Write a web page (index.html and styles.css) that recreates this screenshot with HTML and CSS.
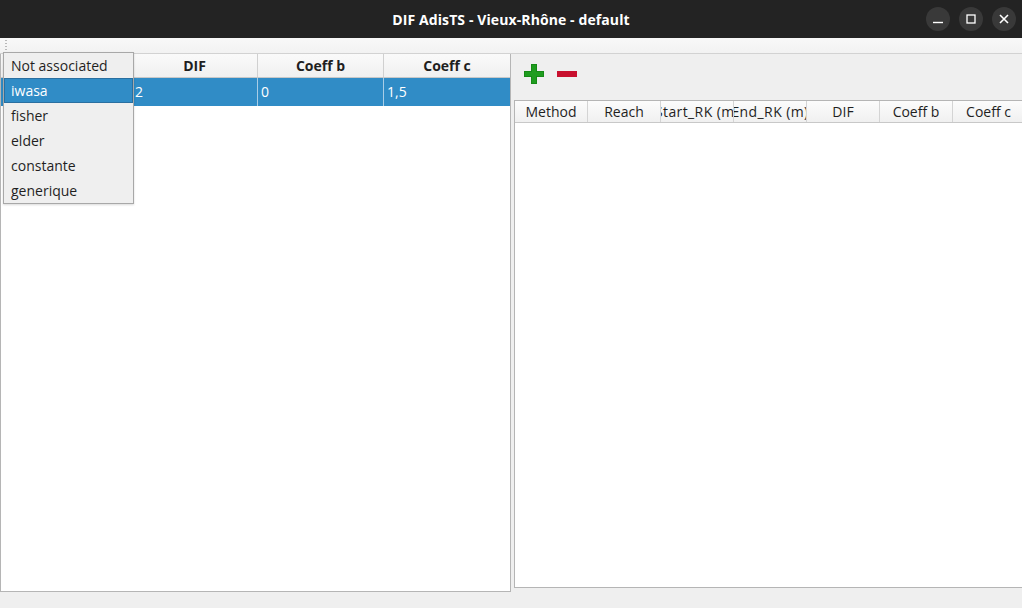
FILE: index.html
```html
<!DOCTYPE html>
<html>
<head>
<meta charset="utf-8">
<link rel="stylesheet" href="styles.css">
</head>
<body>
<div class="window">
  <div class="titlebar">
    <div class="title">DIF AdisTS - Vieux-Rhône - default</div>
    <div class="wbtns">
      <span class="wbtn"><svg width="10" height="10" viewBox="0 0 10 10"><path d="M0 8.5h10" stroke="#fff" stroke-width="1.4"/></svg></span>
      <span class="wbtn"><svg width="10" height="10" viewBox="0 0 10 10"><rect x="1" y="1" width="8" height="8" fill="none" stroke="#fff" stroke-width="1.3"/></svg></span>
      <span class="wbtn"><svg width="10" height="10" viewBox="0 0 10 10"><path d="M1 1L9 9M9 1L1 9" stroke="#fff" stroke-width="1.6"/></svg></span>
    </div>
  </div>
  <div class="toolbar"><span class="grip"></span></div>
  <div class="main">
    <div class="leftpane">
      <div class="ltable">
        <div class="lhead">
          <div class="lh c0"></div>
          <div class="lh">DIF</div>
          <div class="lh">Coeff b</div>
          <div class="lh last">Coeff c</div>
        </div>
        <div class="lrow sel">
          <div class="lc c0"></div>
          <div class="lc">2</div>
          <div class="lc">0</div>
          <div class="lc last">1,5</div>
        </div>
      </div>
    </div>
    <div class="splitter"></div>
    <div class="rightpane">
      <div class="actions">
        <svg class="plus" width="20" height="20" viewBox="0 0 20 20"><path d="M7 0h6v7h7v6h-7v7H7v-7H0V7h7z" fill="#168a16"/><path d="M8 1h4v7h7v4h-7v7H8v-7H1V8h7z" fill="#1f9d1f"/></svg>
        <svg class="minus" width="20" height="20" viewBox="0 0 20 20"><rect x="0" y="7" width="20" height="6" fill="#c8102e"/></svg>
      </div>
      <div class="rtable">
        <div class="rhead">
          <div class="rh">Method</div>
          <div class="rh">Reach</div>
          <div class="rh clip"><span>Start_RK (m)</span></div>
          <div class="rh clip"><span>End_RK (m)</span></div>
          <div class="rh">DIF</div>
          <div class="rh">Coeff b</div>
          <div class="rh last">Coeff c</div>
        </div>
      </div>
    </div>
  </div>
  <div class="popup">
    <div class="item">Not associated</div>
    <div class="item hl">iwasa</div>
    <div class="item">fisher</div>
    <div class="item">elder</div>
    <div class="item">constante</div>
    <div class="item">generique</div>
  </div>
</div>
</body>
</html>
```
FILE: styles.css
```css
* { box-sizing: border-box; }
html, body { margin: 0; padding: 0; }
body {
  width: 1022px; height: 608px; overflow: hidden;
  background: #efefef;
  font-family: "Open Sans", "Noto Sans", sans-serif;
  font-size: 14px; color: #1f1f1f;
}
.window { position: relative; width: 1022px; height: 608px; display: flex; flex-direction: column; }
.titlebar {
  height: 38px; background: #232323; color: #fff; position: relative;
  display: flex; align-items: center; justify-content: center;
}
.title { font-weight: 700; font-size: 14px; letter-spacing: 0.1px; }
.wbtns { position: absolute; right: 6px; top: 7px; display: flex; gap: 9px; }
.wbtn {
  width: 24px; height: 24px; border-radius: 50%; background: #393939;
  display: flex; align-items: center; justify-content: center;
}
.toolbar {
  height: 16px; background: linear-gradient(#f8f8f8, #f2f2f2);
  border-bottom: 1px solid #d2d2d2; position: relative;
}
.grip {
  position: absolute; left: 5px; top: 2px; width: 2px; height: 12px;
  background: repeating-linear-gradient(#b8b8b8 0 1px, transparent 1px 3px);
}
.main { display: flex; height: 537px; }
.leftpane {
  flex: none;
  width: 511px; height: 538px; background: #fff; border: 1px solid #b5b5b5; border-top: none;
}
.ltable { display: flex; flex-direction: column; }
.lhead { display: flex; height: 24px; background: linear-gradient(#fafafa, #f0f0f0); border-bottom: 1px solid #c8c8c8; }
.lh { width: 126px; border-right: 1px solid #d0d0d0; font-weight: 700; text-align: center; line-height: 24px; }
.lh.c0, .lc.c0 { width: 131px; }
.lh.last, .lc.last { width: 126px; border-right: none; }
.lrow { display: flex; height: 28px; }
.lrow.sel { background: #308cc6; color: #fff; }
.lc { width: 126px; border-right: 1px solid #a9cde6; padding-left: 3px; line-height: 27px; }
.splitter { flex: none; width: 3px; }
.rightpane { flex: 1; min-width: 0; display: flex; flex-direction: column; }
.actions { height: 46px; display: flex; align-items: flex-start; gap: 13px; padding: 10px 0 0 10px; }
.rtable { height: 488px; background: #fff; border: 1px solid #b5b5b5; border-right: none; overflow: hidden; }
.rhead { display: flex; height: 22px; background: linear-gradient(#fcfcfc, #f0f0f0); border-bottom: 1px solid #c8c8c8; }
.rh { flex: none; width: 73px; border-right: 1px solid #d4d4d4; text-align: center; line-height: 21px; white-space: nowrap; overflow: hidden; }
.rh.last { width: 71px; border-right: none; }
.rh.clip { display: flex; justify-content: center; }
.rh.clip span { flex: none; letter-spacing: 0.4px; }
.popup {
  position: absolute; left: 3px; top: 52px; width: 131px; height: 152px;
  background: #efefef; border: 1px solid #a8a8a8; padding: 0;
  box-shadow: 0 1px 2px rgba(0,0,0,0.15);
}
.item { height: 25px; line-height: 25px; padding-left: 7px; }
.item.hl { background: #308cc6; color: #fff; border: 1px solid #2a6fa0; line-height: 23px; padding-left: 6px; }
```
